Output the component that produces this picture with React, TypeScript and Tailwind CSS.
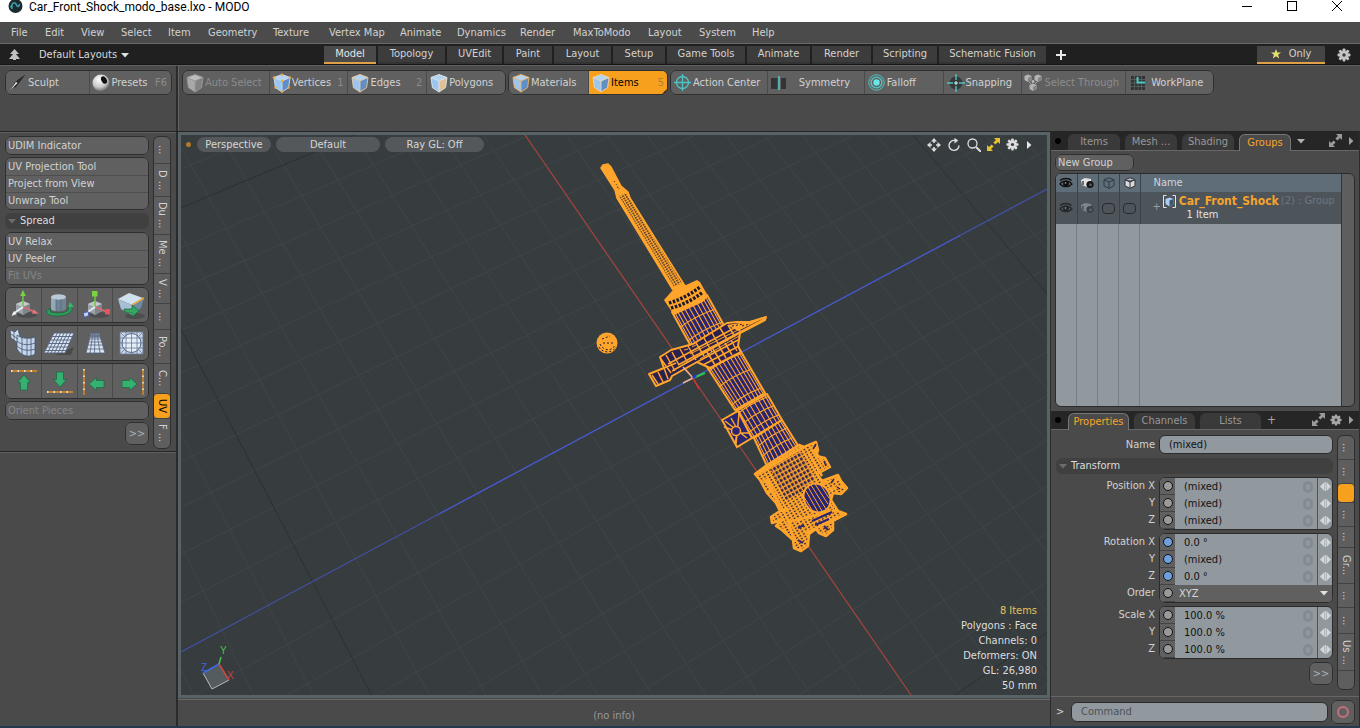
import React from "react";

type P = [number, number];

/* ---------- small icons ---------- */

function Cube({ edge = "#cfe0f2", dim = false, face = false, dots = false, size = 20 }: { edge?: string; dim?: boolean; face?: boolean; dots?: boolean; size?: number }) {
  const l = dim ? "#a9a9a9" : "#9cc6f0";
  const r = dim ? "#838383" : face ? "#e3bf92" : "#5f8fc4";
  const t = dim ? "#bdbdbd" : "#b4d4f2";
  return (
    <svg width={size} height={size} viewBox="0 0 20 20" className="shrink-0">
      <path d="M2 4.5 10 8v11L3.4 14.6Z" fill={l} />
      <path d="M18 4.5 10 8v11l6.6-4.4Z" fill={r} />
      <path d="M2 4.5 10 1.5l8 3L10 8Z" fill={t} />
      <path d="M2 4.5 10 1.5l8 3-1.4 10.1L10 19l-6.6-4.4ZM2 4.5 10 8l8-3.5M10 8v11" fill="none" stroke={edge} strokeWidth=".9" strokeLinejoin="round" />
      {dots && [[2, 4.5], [10, 1.8], [18, 4.5], [10, 8], [10, 18.6], [3.4, 14.6], [16.6, 14.6]].map(([x, y]) => (
        <circle key={`${x}-${y}`} cx={x} cy={y} r="1.2" fill="#f2a83c" />
      ))}
    </svg>
  );
}

const Gear = ({ color = "#c4c4c4", size = 14 }: { color?: string; size?: number }) => (
  <svg width={size} height={size} viewBox="0 0 14 14" className="shrink-0">
    {[0, 45, 90, 135].map((a) => (
      <rect key={a} x="5.6" y="0.5" width="2.8" height="13" rx="0.8" fill={color} transform={`rotate(${a} 7 7)`} />
    ))}
    <circle cx="7" cy="7" r="4.6" fill={color} />
    <circle cx="7" cy="7" r="1.7" fill="#3c3c3c" />
  </svg>
);

const Expand = ({ color = "#b4b4b4" }: { color?: string }) => (
  <svg width="13" height="13" viewBox="0 0 13 13" className="shrink-0" fill={color}>
    <path d="M7 0h6v6l-2-2-2.6 2.6-2-2L9 2ZM6 13H0V7l2 2 2.6-2.6 2 2L4 11Z" />
  </svg>
);

const Tri = ({ dir = "down", color = "#c0c0c0" }: { dir?: "down" | "right"; color?: string }) => (
  <svg width="8" height="8" viewBox="0 0 8 8" className="shrink-0" fill={color}>
    {dir === "down" ? <path d="M0 2h8L4 6.4Z" /> : <path d="M2 0v8l4.4-4Z" />}
  </svg>
);

const BrushIcon = () => (
  <svg width="20" height="18" viewBox="0 0 20 18" className="shrink-0">
    <path d="M18 0C12 3 8 8 6 13l1.6 1C11 9 15 5 18 0Z" fill="#2a2a2a" stroke="#777" strokeWidth=".4" />
    <path d="M15 3C9 5 6 9 5 12L1 17l5-3.6C9 11 12 8 15 3Z" fill="#2c2c2c" />
    <path d="M1 17C4 14 6 11 8 8L9.500 9C6 12 4 15 1 17Z" fill="#f2f2f2" />
  </svg>
);

const BallIcon = () => (
  <svg width="18" height="18" viewBox="0 0 18 18" className="shrink-0">
    <defs>
      <radialGradient id="ball" cx=".4" cy=".3" r=".75">
        <stop offset="0" stopColor="#fff" />
        <stop offset=".6" stopColor="#c8c8c8" />
        <stop offset="1" stopColor="#555" />
      </radialGradient>
    </defs>
    <circle cx="9" cy="9" r="8.500" fill="url(#ball)" />
    <ellipse cx="12" cy="6" rx="2.600" ry="4" fill="#111" transform="rotate(-28 12 6)" />
  </svg>
);

const CenterIcon = () => (
  <svg width="17" height="17" viewBox="0 0 17 17" className="shrink-0" fill="none" stroke="#4fc4c4" strokeWidth="1.3">
    <circle cx="8.500" cy="8.500" r="6" />
    <path d="M8.500 0v17M0 8.500h17" />
  </svg>
);

const SymmetryIcon = () => (
  <svg width="16" height="16" viewBox="0 0 16 16" className="shrink-0">
    <path d="M0 3h6.500v11H0ZM10 3h5v11h-5Z" fill="#343434" />
    <path d="M8 1v14" stroke="#4fc4c4" strokeWidth="1.600" />
  </svg>
);

const FalloffIcon = () => (
  <svg width="17" height="17" viewBox="0 0 17 17" className="shrink-0" fill="none" stroke="#4fc4c4">
    <circle cx="8.500" cy="8.500" r="7.700" />
    <circle cx="8.500" cy="8.500" r="5.400" strokeWidth="1.400" />
    <circle cx="8.500" cy="8.500" r="3.200" fill="#6be4e4" stroke="none" />
  </svg>
);

const SnapIcon = () => (
  <svg width="18" height="18" viewBox="0 0 18 18" className="shrink-0">
    <circle cx="9" cy="9" r="6.500" fill="#343838" />
    <path d="M9 0v6M9 12v6M0 9h6M12 9h6" stroke="#4fc4c4" strokeWidth="1.400" />
    <path d="M9 7v4M7 9h4" stroke="#c8ffff" />
  </svg>
);

const ThroughIcon = () => (
  <svg width="18" height="18" viewBox="0 0 18 18" className="shrink-0">
    {[[4, 4], [14, 4], [9, 13]].map(([x, y]) => (
      <g key={`${x}${y}`}>
        <path d={`M${x - 3.5} ${y - 2} ${x} ${y - 3.5} ${x + 3.5} ${y - 2}V${y + 2}L${x} ${y + 4} ${x - 3.5} ${y + 2}Z`} fill="#b4b4b4" />
        <path d={`M${x} ${y}v4l3.500-2v-4Z`} fill="#858585" />
      </g>
    ))}
    <path d="M5 8l3 3M13 8l-3 3" stroke="#a8a8a8" />
    <circle cx="9" cy="7.500" r="1.500" fill="#b8b8b8" />
  </svg>
);

const PlaneIcon = () => (
  <svg width="14" height="15" viewBox="0 0 14 15" className="shrink-0">
    <rect y="1" width="14" height="14" fill="#303434" />
    <path d="M0 4.500h14M0 8h14M0 11.500h14M3.500 1v14M7 1v14M10.500 1v14" stroke="#555b5b" />
    <path d="M6.500 2v5.500H14" fill="none" stroke="#4fc4c4" strokeWidth="2" />
  </svg>
);

const Eye = ({ color }: { color: string }) => (
  <svg width="14" height="12" viewBox="0 0 14 12" className="block" fill="none" stroke={color}>
    <path d="M1 7C3 3.500 10 3 13 7 10 10.500 4 10.500 1 7Z" strokeWidth="1.200" />
    <circle cx="7" cy="6.500" r="2.500" fill={color} />
    <path d="M1 3.500C4 .8 10 .8 12.500 3.500" strokeWidth="1.300" />
    <circle cx="6.500" cy="6" r=".8" fill="#aaa" stroke="none" />
  </svg>
);

const Camera = ({ dim = false }: { dim?: boolean }) => (
  <svg width="13" height="12" viewBox="0 0 13 12" className="block">
    <path d="M0 3 4 1l6 1v6L6 10 1 8Z" fill={dim ? "#7f868b" : "#e2e2e2"} />
    <circle cx="9" cy="7.500" r="3.600" fill={dim ? "#3b4146" : "#141414"} />
    <circle cx="9.500" cy="7.800" r="1.500" fill={dim ? "#59626a" : "#555"} />
    <path d="M2 4v4" stroke={dim ? "#4e555a" : "#444"} strokeWidth="1.500" />
  </svg>
);

const HexCube = ({ color, fill }: { color: string; fill: string }) => (
  <svg width="12" height="12" viewBox="0 0 12 12" className="block" fill={fill} stroke={color} strokeLinejoin="round">
    <path d="M6 .8 11 2.800v6L6 11.400 1 8.800v-6ZM1 2.800 6 5l5-2.200M6 5v6.400" />
  </svg>
);

/* ---------- UV tool icons ---------- */

const svgTool = "h-8 w-8 shrink-0";

function AxisTool({ blocks = false }: { blocks?: boolean }) {
  return (
    <svg viewBox="0 0 32 32" className={svgTool}>
      <ellipse cx="20" cy="26" rx="10" ry="3" fill="#3a3a3a" opacity=".5" />
      <path d="M9 15 16 12l7 3v7l-7 4-7-4Z" fill="#9aa3a8" />
      <path d="M9 15 16 18l7-3-7-3Z" fill="#c3c9cc" />
      <path d="M16 18v8l7-4v-7Z" fill="#7d868b" />
      <path d="M16 18V6" stroke="#6cc83c" strokeWidth="1.500" />
      <path d="M16 18 28 23" stroke="#d96a70" strokeWidth="1.800" />
      <path d="M16 18 6 25" stroke="#e6ecf5" strokeWidth="2" />
      {blocks ? (
        <>
          <rect x="13" y="2" width="5.500" height="5.500" fill="#77d33f" />
          <rect x="26" y="20" width="5" height="5.500" fill="#e2555c" />
          <path d="M4 24l5-1.500 1 4-4.500 2Z" fill="#c2d0f5" stroke="#4257a0" />
        </>
      ) : (
        <>
          <path d="M16 1l2.800 6h-5.600Z" fill="#77d33f" />
          <path d="M31.500 24.500 25 24.800l1.800-4.200Z" fill="#e8747a" />
          <path d="M4.500 27 7 22l2.500 3Z" fill="#eef3fb" />
        </>
      )}
    </svg>
  );
}

const CylTool = () => (
  <svg viewBox="0 0 32 32" className={svgTool}>
    <path d="M9 19c-9 2-7 8 5 8 11 0 18-5 14-10l-3 1c3 4-4 6-11 6-8 0-9-3-5-5Z" fill="#2f9e5c" stroke="#17613a" strokeWidth=".7" />
    <path d="M8 8v12c2 3 13 3 15 0V8Z" fill="#6f8596" />
    <path d="M8 8v12c1 1 3 2 5 2V9Z" fill="#93a9b8" />
    <ellipse cx="15.500" cy="8" rx="7.500" ry="2.800" fill="#b9cad6" />
    <path d="M13 10v12M18 10v12" stroke="#52687a" strokeWidth=".7" />
    <path d="m27 13 4 5h-6Z" fill="#3db46d" />
  </svg>
);

const WrapTool = () => (
  <svg viewBox="0 0 32 32" className={svgTool}>
    <ellipse cx="20" cy="27" rx="10" ry="3" fill="#3a3a3a" opacity=".5" />
    <path d="M3 10 14 4l14 5-11 7Z" fill="#cfe0ee" />
    <path d="M3 10 17 16v10L6 20Z" fill="#a5bfd4" />
    <path d="M17 16 29 9l-3 10-9 7Z" fill="#6c8aa3" />
    <path d="M17 16 29 9" stroke="#e9a93e" strokeWidth="1.600" />
    <path d="M9 20h8v-4l7 6-7 6v-4H11Z" fill="#34a862" stroke="#17613a" strokeWidth=".7" />
  </svg>
);

const SkirtTool = () => (
  <svg viewBox="0 0 32 32" className={svgTool} stroke="#44546e" strokeWidth=".8">
    <path d="M3 3l5 2 3-3 2 8-2 6-7-5Z" fill="#cfdcec" />
    <path d="M10 8c5 4 13 4 18 2v17c-6 4-14 2-18-5Z" fill="#c3d5ea" />
    <path d="M15 10v17M20 11.500V29M24 11v18M10 14c5 5 13 4 18 2M10 19c5 5 13 5 18 3M4 7l7 5M7 5v8" fill="none" />
  </svg>
);

const GridTool = () => (
  <svg viewBox="0 0 32 32" className={svgTool}>
    <path d="M12 28h16l3-8Z" fill="#333" opacity=".5" />
    <path d="M11 6h20L22 26H1Z" fill="#d9e4f2" />
    <path d="M9.300 9.500h20.100M7.600 13h20.100M6 16.500h20M4.300 20h20.300M2.600 23.500H23M14.300 6 4.500 26M17.600 6 8 26M21 6l-9.500 20M24.300 6 15 26M27.600 6 18.500 26M11 6 1 26h21l9-20Z" fill="none" stroke="#53627e" strokeWidth=".9" />
  </svg>
);

const TrapTool = () => (
  <svg viewBox="0 0 32 32" className={svgTool}>
    <path d="M12 6h8l6 20H7Z" fill="#d9e4f2" />
    <path d="M12 6h8l1.200 5H10.800Z" fill="#8793a8" />
    <path d="M11 9h10M10.200 12h11.600M9.500 15h13.100M8.900 18h14.500M8 22h17M7 26h19L20 6h-8ZM14 6l-3 20M16 6l-.5 20M18 6l3 20" fill="none" stroke="#53627e" strokeWidth=".8" />
  </svg>
);

const SphereTool = () => (
  <svg viewBox="0 0 32 32" className={svgTool}>
    <rect x="5" y="5" width="23" height="22" fill="#c6d5e8" />
    <circle cx="16.500" cy="16" r="9.500" fill="#e4eef9" stroke="#53627e" />
    <path d="M5 5h23v22H5ZM5 11h23M5 21h23M5 16h23M11 5v22M22 5v22M16.500 5v22M5 5l5 5M28 5l-5 5M5 27l5-5M28 27l-5-5" fill="none" stroke="#6b7a94" strokeWidth=".8" />
  </svg>
);

function ArrowTool({ dir }: { dir: "up" | "down" | "left" | "right" }) {
  const shape = { up: "rotate(0 17 18)", right: "rotate(90 15 17)", down: "translate(0 -2) rotate(180 17 17)", left: "rotate(270 18 18)" }[dir];
  const lines = { up: "M4 6h26", down: "M4 27h26", left: "M5 4v26", right: "M28 4v26" }[dir];
  return (
    <svg viewBox="0 0 32 32" className={svgTool}>
      <path d={lines} stroke="#e58f1c" strokeWidth="1.300" />
      <path d={lines} stroke="#fff" strokeWidth="1.300" strokeDasharray="1.500 5" />
      <path d="M17 10l6.500 7.500h-3V25h-7v-7.500h-3Z" fill="#36b070" stroke="#1c6b42" strokeWidth=".8" transform={shape} />
    </svg>
  );
}

/* ---------- 3D view ---------- */

const ORANGE = "#ffa52b";
const NAVY = "#2a2570";

const lerp = (a: P, b: P, t: number): P => [a[0] + (b[0] - a[0]) * t, a[1] + (b[1] - a[1]) * t];
const pts = (list: P[]) => list.map((p) => p.join(",")).join(" ");

/* Meshed quad: corners run left-top, right-top, right-bottom, left-bottom. */
function Mesh({ q, cols, rows, bow = 0, fill = NAVY }: { q: [P, P, P, P]; cols: number; rows: number[]; bow?: number; fill?: string }) {
  const [a, b, c, d] = q;
  const len = Math.hypot(d[0] - a[0], d[1] - a[1]) || 1;
  const ux = ((d[0] - a[0]) / len) * bow;
  const uy = ((d[1] - a[1]) / len) * bow;
  const ring = (t: number) => {
    const p = lerp(a, d, t);
    const r = lerp(b, c, t);
    const m = lerp(p, r, 0.5);
    return `M${p.join(" ")}Q${m[0] + ux} ${m[1] + uy} ${r.join(" ")}`;
  };
  let path = "";
  for (let i = 1; i < cols; i++) {
    const t = 0.5 - Math.cos((Math.PI * i) / cols) * 0.5;
    const s = t * 0.5 + (i / cols) * 0.5;
    path += `M${lerp(a, b, s).join(" ")}L${lerp(d, c, s).join(" ")}`;
  }
  rows.forEach((t) => (path += ring(t)));
  return (
    <g stroke={ORANGE}>
      <polygon points={pts(q)} fill={fill} strokeWidth="2" strokeLinejoin="round" />
      <path d={path} fill="none" strokeWidth="1.100" />
    </g>
  );
}

function gridLines() {
  const light: string[] = [];
  const dark: string[] = [];
  for (let k = -16; k <= 16; k++) {
    if (k === 0) continue;
    const t = k / 10;
    const x = 525 + (414.5 * t) / (1 + 0.0685 * t);
    const sx = (x + 1260) / (135 + 2440);
    (k % 10 ? light : dark).push(`M${x} 135L${x + sx * 600} 735`);
    const y = 652 + (500 * t) / (1 - 0.126 * t);
    const sy = (-1413 - y) / (4040 - 181);
    (k % 10 ? light : dark).push(`M181 ${y}L1081 ${y + sy * 900}`);
  }
  return [light.join(""), dark.join("")];
}

function Scene() {
  const [light, dark] = gridLines();
  return (
    <svg viewBox="181 135 866 560" preserveAspectRatio="xMidYMid slice" className="absolute inset-0 h-full w-full">
      <defs>
        <pattern id="dense" width="4" height="3" patternUnits="userSpaceOnUse" patternTransform="rotate(-31)">
          <rect width="4" height="3" fill={ORANGE} />
          <rect x="1" y="1" width="2" height="1.200" fill="#29203c" />
        </pattern>
        <pattern id="loose" width="4" height="4.500" patternUnits="userSpaceOnUse" patternTransform="rotate(-29)">
          <rect width="4" height="4.500" fill={ORANGE} />
          <rect x="1" y="1" width="2.600" height="3" fill="#2b2150" />
        </pattern>
        <pattern id="rod" width="3" height="2.500" patternUnits="userSpaceOnUse" patternTransform="rotate(-31)">
          <rect width="3" height="2.500" fill={ORANGE} />
          <rect x="0" y="1" width="1.800" height="1.200" fill="#20192c" />
        </pattern>
      </defs>
      <path d={light} stroke="#3f4548" fill="none" />
      <path d={dark} stroke="#2c3134" fill="none" />
      <path d="M525 135 911 695" stroke="#a8453f" strokeWidth="1.200" />
      <path d="M181 652 693 378 1047 189" stroke="#4450a4" strokeWidth="1.200" fill="none" />
      <path d="M440 513.500 693 378 960 235.500" stroke="#4659c6" strokeWidth="1.200" fill="none" />

      {/* ball */}
      <circle cx="607" cy="343" r="10.500" fill={ORANGE} />
      <path d="M599 347c3 6 13 7 17 0M600 344c3 7 12 8 15 1M602 339l8-3M603 343h10" stroke="#241c30" strokeDasharray="2 2" fill="none" />

      {/* rod */}
      <polygon points="601,168 603,165 608,164 611,167 621,186 628,192 630,198 685,286 673,290 617,198 615,190" fill={ORANGE} stroke={ORANGE} strokeWidth="1.500" strokeLinejoin="round" />
      <polygon points="619,196 626,193 682,283 674,287" fill="url(#rod)" />
      <path d="M614 181l6 9M617 187l3 1" stroke="#20192c" strokeDasharray="1 3" />

      {/* upper cylinder */}
      <Mesh q={[[672, 312], [707, 295], [726, 329], [692, 348]]} cols={11} rows={[0.42, 0.8]} bow={-3} />
      <polygon points="664,300 672,291 686,285 697,280 700,282 708,296 703,302 674,315" fill={ORANGE} />
      <path d="M669 303C680 300 691 294 700 287M671 308C683 305 694 299 703 292" stroke="#1c1726" strokeWidth="3.500" strokeDasharray="2.500 1.500" fill="none" />

      {/* lower cylinder */}
      <Mesh q={[[707, 367], [740, 350], [765, 393], [735, 410]]} cols={11} rows={[0.08, 0.45, 0.88]} bow={-3} />

      {/* flange */}
      <polygon points="649,374 664,368 660,357 671,350 693,344 727,323 737,322 750,322 766,317 765,320 740,333 738,346 741,352 710,368 697,362 672,376 670,380 656,386" fill="#2b2150" stroke={ORANGE} strokeWidth="2" strokeLinejoin="round" />
      <path d="M661 359 671 373M666 355l9 16M672 352l7 13M664 368l12-5M652 375l6 9M658 372l5 10M664 368l4 11M678 365 766 318M672 371 745 330M668 364 740 325M680 349l8 14M688 346l8 14M696 343l8 13M704 338l8 14M712 333l8 14M720 328l8 13M728 325l7 12M736 324l4 7M697 362 738 340M703 365 739 346M707 352l8 13M713 349l8 13M719 346l7 12M725 343l7 12M731 340l6 11" stroke={ORANGE} strokeWidth="1.500" fill="none" />
      <path d="M684 350l4-1M692 347l4-2M690 354 760 319M700 359 739 336" stroke={ORANGE} fill="none" />
      <path d="M727 325l13-2 24-5-26 13Z" fill={ORANGE} />
      <path d="M732 326l12-2M742 326l8-2" stroke="#29203c" strokeDasharray="2 2" />

      {/* clamp and side plate */}
      <Mesh q={[[736, 411], [767, 394], [782, 420], [752, 438]]} cols={9} rows={[0.1, 0.45, 0.8]} bow={-3} />
      <Mesh q={[[754, 438], [782, 420], [799, 447], [767, 466]]} cols={10} rows={[0.3, 0.65]} bow={-3} />
      <polygon points="722,420 738,411 752,438 737,447" fill={NAVY} stroke={ORANGE} strokeWidth="2" />
      <path d="M725 421 747 438M739 414 736 444M724 427l9 3M738 433l11 0M731 418l5 9M737 434l-2 10" stroke={ORANGE} strokeWidth="1.500" />
      <circle cx="736" cy="431" r="4.500" fill={NAVY} stroke={ORANGE} strokeWidth="1.500" />

      {/* reservoir housing */}
      <polygon points="755,474 767,465 799,445 804,447 816,442 818,450 816,456 825,458 830,467 817,474 822,481 838,475 841,481 847,488 841,494 833,493 831,500 838,511 846,514 833,521 833,530 826,536 819,533 816,529 809,534 808,546 801,551 794,548 793,540 782,530 776,526 782,520 772,523 771,517 780,511 776,503 767,493 760,480" fill="url(#dense)" stroke={ORANGE} strokeWidth="2.500" strokeLinejoin="round" />
      <polygon points="770,468 800,450 815,480 802,492 786,500" fill="url(#loose)" />
      <path d="M757 474 804 447M762 483l5-3 20 38 8 24M767 493l6-3M780 511l9-2M788 522l50-12M795 540l-6-14M806 533l40-19M808 452l14 24M812 447l14 20M822 484l16-5M826 490l18-4" stroke={ORANGE} strokeWidth="2.500" fill="none" />
      <path d="M812 521l20-9M798 528l6-3M815 525l14-6M824 526l4 4M798 540l5 3" stroke={NAVY} strokeWidth="2" />
      <path d="M816 444l-3 5M824 461l2 5M834 479l-3 4M840 489l-3-2" stroke="#2b2150" strokeWidth="1.500" />
      <ellipse cx="817" cy="498" rx="13" ry="15" fill={NAVY} stroke={ORANGE} strokeWidth="2" transform="rotate(-30 817 498)" />
      <path d="M806 491l12 21M808 487l14 24M811 485l15 24M815 484l13 20M820 484l9 14M804 497l8 13" stroke={ORANGE} />

      {/* origin handle */}
      <path d="M693 378 683 367M693 378l-10 5" stroke="#e8b48c" strokeWidth="1.500" />
      <path d="M693 378l12-5" stroke="#2fc54a" strokeWidth="2" />
      <path d="M693 378l3-3" stroke="#2233dd" strokeWidth="2.500" />
      <path d="M693 378l6 11" stroke="#e0312c" strokeWidth="1.500" />

      {/* orientation gizmo */}
      <polygon points="203,673 219,664 229,680 212,689" fill="#555c5f" stroke="#b5babd" />
      <path d="M203 673 219 664" stroke="#3c66e0" strokeWidth="1.500" />
      <path d="M219 664 229 680" stroke="#c9423c" strokeWidth="1.500" />
      <path d="M219 664l2-7" stroke="#4bc24b" strokeWidth="1.500" />
      <g fontFamily="Liberation Sans, sans-serif" fontSize="10">
        <text x="220" y="654" fill="#4bc24b">Y</text>
        <text x="201" y="671" fill="#3c66e0">Z</text>
        <text x="227" y="679" fill="#c9423c">X</text>
      </g>
    </svg>
  );
}

/* ---------- shared classes ---------- */

const group = "flex overflow-hidden rounded-md border border-[#2e2e2e] bg-[#606060] shadow-[0_0_1px_#6a6a6a]";
const toolBtn = "flex min-w-0 items-center border-l border-[#4a4a4a] first:border-l-0 whitespace-nowrap";
const field = "h-full w-full min-w-0 bg-[#91999f] text-[#111] outline-none";

/* ---------- sections ---------- */

const MENUS = ["File", "Edit", "View", "Select", "Item", "Geometry", "Texture", "Vertex Map", "Animate", "Dynamics", "Render", "MaxToModo", "Layout", "System", "Help"];
const LAYOUTS = ["Model", "Topology", "UVEdit", "Paint", "Layout", "Setup", "Game Tools", "Animate", "Render", "Scripting", "Schematic Fusion"];

function TitleBar() {
  return (
    <header className="flex h-[22px] shrink-0 items-start justify-between bg-white text-black">
      <div className="flex items-start gap-[6px] pl-2">
        <svg width="15" height="15" viewBox="0 0 15 15">
          <circle cx="7.500" cy="6" r="7" fill="#1c2a30" />
          <path d="M4 9V5c0-2 3-3 4-1l1 2c1 1 3 0 2-2M4 5C3 6 3 7 2 7" fill="none" stroke="#3f9aa3" strokeWidth="1.600" />
        </svg>
        <h1 className="font-['Roboto',sans-serif] text-[12px] leading-[15px]">Car_Front_Shock_modo_base.lxo - MODO</h1>
      </div>
      <div className="flex gap-[35px] pr-[18px]">
        <button aria-label="Minimize" className="h-3 w-[10px]"><svg width="10" height="12"><path d="M0 6.500h10" stroke="#000" /></svg></button>
        <button aria-label="Maximize" className="h-3 w-[10px]"><svg width="10" height="12"><rect x=".5" y="1.500" width="9" height="9" fill="none" stroke="#000" /></svg></button>
        <button aria-label="Close" className="h-3 w-[10px]"><svg width="10" height="12"><path d="M0 1l10 10M10 1 0 11" stroke="#000" /></svg></button>
      </div>
    </header>
  );
}

function MenuBar() {
  return (
    <nav className="grid h-[22px] shrink-0 grid-cols-[34px_36px_40px_47px_40px_65px_56px_71px_57px_63px_53px_75px_51px_53px_40px] items-center border-b border-[#6a6a6a] bg-[#4b4b4b] pl-[11px] pt-px">
      {MENUS.map((m) => <button key={m} className="text-left whitespace-nowrap">{m}</button>)}
    </nav>
  );
}

function LayoutBar() {
  return (
    <div className="flex h-[21px] shrink-0 items-center border-b border-[#161616] bg-[#202020] pt-px">
      <div className="flex w-[324px] items-center gap-[19px] pl-[9px]">
        <svg width="11" height="11" viewBox="0 0 11 11" fill="#c0c0c0"><path d="M5.500 0 10 5H7l4 5H7v1H4v-1H0l4-5H1Z" /></svg>
        <button className="flex items-center gap-1 text-[#d8d8d8]">Default Layouts <Tri color="#e0e0e0" /></button>
      </div>
      <div className="grid h-[18px] grid-cols-[52px_67px_55px_48px_57px_52px_78px_63px_59px_64px_107px] gap-[2px]">
        {LAYOUTS.map((l, i) => (
          <button key={l} className={`whitespace-nowrap border-b-2 pt-px ${i === 0 ? "border-[#e0a048] bg-[#4a4a4a] text-[#e4e4e4]" : "border-[#333] bg-[#3c3c3c]"}`}>{l}</button>
        ))}
      </div>
      <button aria-label="Add layout" className="ml-[10px]">
        <svg width="10" height="10"><path d="M5 0v10M0 5h10" stroke="#e8e8e8" strokeWidth="2" /></svg>
      </button>
      <div className="ml-auto flex h-[18px] items-center gap-3 pr-[9px]">
        <button className="flex h-full w-[68px] items-center justify-center gap-2 border-b-2 border-[#e0a048] bg-[#454545]">
          <svg width="10" height="10" viewBox="0 0 10 10"><path d="M5 0l1.300 3.500H10L7.100 5.700 8.200 9.500 5 7.300 1.800 9.500 2.900 5.700 0 3.500h3.700Z" fill="#e6e070" /></svg>
          Only
        </button>
        <Gear />
      </div>
    </div>
  );
}

function ToolBar() {
  return (
    <div className="flex h-[67px] shrink-0 border-b border-[#242424] border-t border-t-[#606060] bg-[#4a4a4a]">
      <div className="w-[178px] shrink-0 border-r-2 border-[#2b2b2b] px-[5px] pt-1">
        <div className={`${group} h-[25px] w-[167px]`}>
          <button className={`${toolBtn} w-1/2 pl-[2px]`}><BrushIcon />Sculpt</button>
          <button className={`${toolBtn} w-1/2 gap-[2px] pl-[2px]`}><BallIcon />Presets<span className="ml-auto pr-1 text-[#8c8c8c]">F6</span></button>
        </div>
      </div>
      <div className="flex min-w-0 flex-1 gap-[2px] border-l border-[#646464] pl-[3px] pt-1">
        <div className={`${group} h-[25px] w-[324px]`}>
          <button className={`${toolBtn} w-[86px] pl-[2px] text-[#8c8c8c]`}><Cube dim edge="#999" />Auto Select</button>
          <button className={`${toolBtn} w-[79px] pl-[2px]`}><Cube dots />Vertices<span className="ml-auto pr-1 text-[#8c8c8c]">1</span></button>
          <button className={`${toolBtn} w-[79px] pl-[2px]`}><Cube edge="#e6cba4" />Edges<span className="ml-auto pr-1 text-[#8c8c8c]">2</span></button>
          <button className={`${toolBtn} w-[79px] pl-[2px]`}><Cube face edge="#dfe6ea" />Polygons</button>
        </div>
        <div className={`${group} h-[25px] w-[160px]`}>
          <button className={`${toolBtn} w-1/2 pl-[2px]`}><Cube edge="#f0b766" />Materials</button>
          <button className={`${toolBtn} relative w-1/2 bg-[#f7a01d] pl-[2px] text-black`}>
            <Cube edge="#e8d8bc" />Items<span className="ml-auto pr-[3px] text-[#a9803c]">5</span>
            <span className="absolute bottom-0 right-0 border-b-[5px] border-l-[5px] border-b-[#222] border-l-transparent" />
          </button>
        </div>
        <div className={`${group} h-[25px] w-[544px]`}>
          <button className={`${toolBtn} w-[96px] gap-[2px] pl-[3px]`}><CenterIcon />Action Center</button>
          <button className={`${toolBtn} w-[97px] gap-3 pl-[3px]`}><SymmetryIcon />Symmetry</button>
          <button className={`${toolBtn} w-[79px] gap-[2px] pl-[3px]`}><FalloffIcon />Falloff</button>
          <button className={`${toolBtn} w-[79px] gap-[1px] pl-[3px]`}><SnapIcon />Snapping</button>
          <button className={`${toolBtn} w-[104px] gap-[2px] pl-[2px] text-[#8c8c8c]`}><ThroughIcon />Select Through</button>
          <button className={`${toolBtn} w-[88px] gap-[6px] pl-[5px]`}><PlaneIcon />WorkPlane</button>
        </div>
      </div>
    </div>
  );
}

function StackGroup({ items }: { items: string[] }) {
  return (
    <div className={`${group} flex-col`}>
      {items.map((t) => (
        <button key={t} className={`h-[17px] border-t border-[#4e4e4e] pl-[2px] text-left leading-[16px] first:border-t-0 ${t === "Fit UVs" ? "text-[#858585]" : ""}`}>{t}</button>
      ))}
    </div>
  );
}

function IconRow({ children }: { children: React.ReactNode }) {
  return (
    <div className={`${group} h-9`}>
      {React.Children.map(children, (c) => (
        <button aria-label="UV tool" className="flex flex-1 items-center justify-center border-l border-[#4a4a4a] first:border-l-0">{c}</button>
      ))}
    </div>
  );
}

function VTabs({ tabs }: { tabs: { t: string; h: string; on?: boolean }[] }) {
  return (
    <div className="flex w-[18px] shrink-0 flex-col self-start overflow-hidden rounded-md border border-[#2e2e2e] bg-[#5e5e5e]">
      {tabs.map((x, i) => (
        <button key={i} aria-label={`Tab ${i + 1}`} className={`flex items-center justify-center border-t border-[#424242] leading-[16px] whitespace-nowrap [writing-mode:vertical-rl] first:border-t-0 ${x.h} ${x.on ? "rounded-sm bg-[#f7a01d] text-black" : ""}`}>
          {x.t}
        </button>
      ))}
    </div>
  );
}

function Section({ title }: { title: string }) {
  return (
    <div className="flex h-[16px] shrink-0 items-center gap-1 rounded-md bg-[#404040] pl-[3px] text-[#dcdcdc]">
      <Tri color="#6c6c6c" />{title}
    </div>
  );
}

function LeftPanel() {
  return (
    <aside className="flex w-[178px] shrink-0 flex-col border-r-2 border-[#2b2b2b]">
      <div className="flex gap-1 border-b border-[#262626] border-t border-t-[#606060] px-[5px] pb-[2px] pt-[3px]">
        <div className="flex min-w-0 flex-1 flex-col gap-[2px]">
          <StackGroup items={["UDIM Indicator"]} />
          <StackGroup items={["UV Projection Tool", "Project from View", "Unwrap Tool"]} />
          <div className="py-px"><Section title="Spread" /></div>
          <StackGroup items={["UV Relax", "UV Peeler", "Fit UVs"]} />
          <IconRow><AxisTool /><CylTool /><AxisTool blocks /><WrapTool /></IconRow>
          <IconRow><SkirtTool /><GridTool /><TrapTool /><SphereTool /></IconRow>
          <IconRow><ArrowTool dir="up" /><ArrowTool dir="down" /><ArrowTool dir="left" /><ArrowTool dir="right" /></IconRow>
          <button className={`${group} h-[19px] items-center pl-[2px] text-[#858585]`}>Orient Pieces</button>
          <button className={`${group} h-[23px] w-6 items-center justify-center self-end text-[#a6b2ba]`}>&gt;&gt;</button>
        </div>
        <VTabs tabs={[
          { t: "...", h: "h-[26px]" }, { t: "D ...", h: "h-[33px]" }, { t: "Du ...", h: "h-[38px]" }, { t: "Me ...", h: "h-[39px]" },
          { t: "V ...", h: "h-[30px]" }, { t: "...", h: "h-[26px]" }, { t: "Po...", h: "h-[34px]" }, { t: "C...", h: "h-[30px]" },
          { t: "UV", h: "h-[25px]", on: true }, { t: "F ...", h: "h-[30px]" },
        ]} />
      </div>
      <div className="flex-1 border-t border-[#606060]" />
    </aside>
  );
}

const pill = "h-[15px] rounded-full bg-[#54585a] leading-[15px] text-[#d6d6d6]";

function Viewport() {
  return (
    <main className="flex min-w-0 flex-1 flex-col">
      <div className="relative min-h-0 flex-1 overflow-hidden border-[3px] border-[#586368] bg-[#373c3f]">
        <Scene />
        <div className="absolute inset-x-0 top-[2px] flex items-center">
          <span className="ml-[5px] h-[5px] w-[5px] rounded-full bg-[#b07a2c]" />
          <button className={`${pill} ml-[6px] w-[74px]`}>Perspective</button>
          <button className={`${pill} ml-[5px] w-[104px]`}>Default</button>
          <button className={`${pill} ml-[5px] w-[99px]`}>Ray GL: Off</button>
          <div className="ml-auto flex items-center gap-[6px] pr-[14px]">
            <svg width="14" height="14" viewBox="0 0 14 14" fill="#dcdcdc"><path d="M7 0l3 3.500H7.800V5H6.200V3.500H4ZM7 14l3-3.500H7.800V9H6.200v1.500H4ZM0 7l3.500-3v2.200H5v1.600H3.500V10ZM14 7l-3.500-3v2.200H9v1.600h1.500V10Z" /></svg>
            <svg width="14" height="14" viewBox="0 0 14 14" fill="none" stroke="#dcdcdc" strokeWidth="1.400"><path d="M8 2.500A5 5 0 1 0 12 7.500" /><path d="M7.500 0l3.500 2.600-3.500 2.600" fill="#dcdcdc" strokeWidth=".5" /></svg>
            <svg width="14" height="14" viewBox="0 0 14 14" fill="none" stroke="#dcdcdc" strokeWidth="1.300"><circle cx="5.500" cy="5.500" r="4.500" /><path d="M9 9l5 5" strokeWidth="2" /></svg>
            <Expand color="#e6c22c" />
            <Gear color="#dcdcdc" size={13} />
            <Tri dir="right" color="#e8e8e8" />
          </div>
        </div>
        <div className="absolute bottom-[2px] right-[10px] text-right leading-[15px] text-[#dedede]">
          <p className="text-[#e8c35a]">8 Items</p>
          <p>Polygons : Face</p>
          <p>Channels: 0</p>
          <p>Deformers: ON</p>
          <p>GL: 26,980</p>
          <p>50 mm</p>
        </div>
      </div>
      <div className="mt-px flex h-[27px] shrink-0 items-center justify-center border-t border-[#6a6a6a] pt-[5px] text-[#989898]">(no info)</div>
    </main>
  );
}

function TabStrip({ tabs, active, gear = false, tail }: { tabs: string[]; active: string; gear?: boolean; tail: React.ReactNode }) {
  return (
    <div className="flex h-[19px] shrink-0 items-end border-b border-[#666] bg-[#262626] pr-1">
      <span className="mb-[6px] ml-1 mr-[7px] h-[6px] w-[6px] rounded-full bg-black" />
      <div className="flex h-[16px] gap-[5px]">
        {tabs.map((t) => (
          <button key={t} className={`rounded-t-md whitespace-nowrap ${gear ? "w-[61px]" : "w-[52px]"} ${t === active ? "-mb-px border border-b-0 border-[#777] bg-[#4a4a4a] text-[#f7a52c]" : "bg-[#3a3a3a] text-[#989898]"}`}>{t}</button>
        ))}
      </div>
      <span className="mb-[3px] ml-[6px] flex h-3 items-center text-[12px] text-[#a8a8a8]">{tail}</span>
      <span className="mb-[3px] ml-auto flex items-center gap-[5px]">
        <Expand color="#9a9a9a" />{gear && <Gear color="#a8a8a8" size={12} />}<Tri dir="right" color="#a0a0a0" />
      </span>
    </div>
  );
}

function Groups() {
  const cell = "border-r border-[#39434a]";
  const box = <span className="mx-auto block h-[11px] w-[13px] rounded border border-[#262c30]" />;
  return (
    <section className="flex h-[279px] shrink-0 flex-col">
      <TabStrip tabs={["Items", "Mesh ...", "Shading", "Groups"]} active="Groups" tail={<Tri color="#b0b0b0" />} />
      <div className="flex min-h-0 flex-1 flex-col pb-1 pl-1 pr-[4px] pt-[3px]">
        <button className={`${group} h-[17px] w-[79px] shrink-0 items-center pl-[2px]`}>New Group</button>
        <div className="mt-[2px] flex min-h-0 flex-1 overflow-hidden rounded-md border border-[#2b2b2b]">
          <div className="flex min-w-0 flex-1 flex-col bg-[#91999f]">
            <table className="w-full table-fixed border-collapse">
              <colgroup>
                <col className="w-[21px]" /><col className="w-[21px]" /><col className="w-[21px]" /><col className="w-[21px]" /><col />
              </colgroup>
              <thead>
                <tr className="h-[18px] bg-[#5f6d79]">
                  <th className={cell} aria-label="Visible"><span className="flex justify-center"><Eye color="#101010" /></span></th>
                  <th className={cell} aria-label="Render"><span className="flex justify-center"><Camera /></span></th>
                  <th className={cell} aria-label="Lock"><span className="flex justify-center"><HexCube color="#2c3a44" fill="none" /></span></th>
                  <th className={cell} aria-label="Select"><span className="flex justify-center"><HexCube color="#333" fill="#d6dade" /></span></th>
                  <th className="pl-[13px] text-left font-normal text-[#cfd4d8]">Name</th>
                </tr>
              </thead>
              <tbody>
                <tr className="h-8 bg-[#4d555b]">
                  <td className={cell}><span className="flex justify-center"><Eye color="#24292d" /></span></td>
                  <td className={cell}><span className="flex justify-center"><Camera dim /></span></td>
                  <td className={cell}>{box}</td>
                  <td className={cell}>{box}</td>
                  <td className="overflow-hidden pl-3">
                    <div className="flex h-[14px] items-center gap-[2px] whitespace-nowrap text-[#6f777c]">
                      <span className="mt-3 text-[#989ea2]">+</span>
                      <svg width="13" height="13" viewBox="0 0 13 13" className="shrink-0"><path d="M3.500.5H.5v12h3M9.500.5h3v12h-3" fill="none" stroke="#e6e6e6" /><path d="M2.500 4 6.500 2.500 10.500 4v5l-4 2.500-4-2.500Z" fill="#a9cdf0" /><path d="M6.500 5.500v6l4-2.500V4Z" fill="#3d566e" /></svg>
                      <b className="pl-px text-[12px] text-[#f5a32b]">Car_Front_Shock</b>
                      <span>(2) : Group</span>
                    </div>
                    <div className="pl-[34px] leading-[14px] text-[#e2e2e2]">1 Item</div>
                  </td>
                </tr>
              </tbody>
            </table>
            <div className="grid flex-1 grid-cols-[21px_21px_21px_21px_1fr]">
              {[0, 1, 2, 3].map((i) => <span key={i} className="border-r border-[#777f85]" />)}
            </div>
          </div>
          <div className="w-[13px] shrink-0 border-l border-[#333] bg-[#5e5e5e]" />
        </div>
      </div>
    </section>
  );
}

type Row = { label: string; value: string };

function ValueGroup({ name, rows, blue = false, order = false }: { name: string; rows: Row[]; blue?: boolean; order?: boolean }) {
  const dot = (b: boolean) => (
    <span className="flex w-[15px] shrink-0 items-center justify-center border-b border-[#444] bg-[#606060]">
      <span className={`h-[10px] w-[10px] rounded-full border border-[#111] ${b ? "bg-[#6fa0dd]" : "bg-[#9a9a9a]"}`} />
    </span>
  );
  return (
    <div className="flex gap-1">
      <div className="w-[99px] text-right">
        {rows.map((r) => <label key={r.label} htmlFor={`${name}-${r.label}`} className="block h-[17px] leading-[18px]">{r.label}</label>)}
        {order && <label htmlFor="order" className="block h-[17px] leading-[18px]">Order</label>}
      </div>
      <div className="min-w-0 flex-1 overflow-hidden rounded-md border border-[#2b2b2b] bg-[#91999f]">
        {rows.map((r) => (
          <div key={r.label} className="flex h-[17px]">
            {dot(blue)}
            <div className="flex min-w-0 flex-1 items-center">
              <input id={`${name}-${r.label}`} className={`${field} pl-[9px]`} defaultValue={r.value} />
              <span className="mr-1 h-3 w-[10px] shrink-0 rounded-full border-[3px] border-[#838b90]" />
              <button aria-label={`Adjust ${name} ${r.label}`} className="flex h-full w-[15px] shrink-0 items-center justify-center border-l border-[#4d5357]">
                <svg width="11" height="9" viewBox="0 0 11 9" className="shrink-0" fill="#d4d8da"><path d="M4.500 0v9L0 4.500ZM5.100 0h.8v9h-.8ZM6.500 0v9L11 4.500Z" /></svg>
              </button>
            </div>
          </div>
        ))}
        {order && (
          <div className="relative flex h-[17px] bg-[#606060]">
            {dot(false)}
            <select id="order" className="w-full appearance-none bg-[#606060] pl-1 text-[#d6d6d6] outline-none"><option>XYZ</option></select>
            <span className="pointer-events-none absolute right-[4px] top-1"><Tri color="#e0e0e0" /></span>
          </div>
        )}
      </div>
    </div>
  );
}

function Properties() {
  return (
    <section className="flex min-h-0 flex-1 flex-col">
      <TabStrip tabs={["Properties", "Channels", "Lists"]} active="Properties" gear tail="+" />
      <div className="flex min-h-0 flex-1 gap-1 pb-1 pl-[5px] pr-[4px] pt-[5px]">
        <div className="flex min-w-0 flex-1 flex-col gap-[3px]">
          <div className="mb-px flex h-[19px] items-center gap-1">
            <label htmlFor="name" className="w-[99px] shrink-0 text-right">Name</label>
            <input id="name" defaultValue="(mixed)" className={`${field} rounded-md border border-[#2b2b2b] pl-[9px]`} />
          </div>
          <Section title="Transform" />
          <ValueGroup name="position" rows={[{ label: "Position X", value: "(mixed)" }, { label: "Y", value: "(mixed)" }, { label: "Z", value: "(mixed)" }]} />
          <ValueGroup name="rotation" blue order rows={[{ label: "Rotation X", value: "0.0 °" }, { label: "Y", value: "(mixed)" }, { label: "Z", value: "0.0 °" }]} />
          <ValueGroup name="scale" rows={[{ label: "Scale X", value: "100.0 %" }, { label: "Y", value: "100.0 %" }, { label: "Z", value: "100.0 %" }]} />
          <button className={`${group} h-[23px] w-6 items-center justify-center self-end text-[#a6b2ba]`}>&gt;&gt;</button>
        </div>
        <VTabs tabs={[
          { t: "...", h: "h-[23px]" }, { t: "...", h: "h-[24px]" }, { t: "", h: "h-[19px]", on: true }, { t: "...", h: "h-[24px]" }, { t: "...", h: "h-[21px]" },
          { t: "Gr...", h: "h-[36px]" }, { t: "...", h: "h-[24px]" }, { t: "...", h: "h-[26px]" }, { t: "Us ...", h: "h-[37px]" }, { t: "", h: "h-[19px]" },
        ]} />
      </div>
    </section>
  );
}

export default function App() {
  return (
    <div className="flex h-screen min-h-[728px] flex-col overflow-hidden bg-[#4a4a4a] font-['DejaVu_Sans_Condensed','DejaVu_Sans',sans-serif] text-[11px] leading-[14px] text-[#d2d2d2]">
      <TitleBar />
      <MenuBar />
      <LayoutBar />
      <ToolBar />
      <div className="flex min-h-0 flex-1 border-b-2 border-[#24394c]">
        <LeftPanel />
        <Viewport />
        <aside className="flex w-[310px] shrink-0 flex-col border-l border-r border-[#2b2b2b] bg-[#4a4a4a]">
          <Groups />
          <Properties />
          <form className="flex h-[30px] shrink-0 items-center gap-[3px] border-t border-[#666] pl-[5px] pr-[4px]" onSubmit={(e) => e.preventDefault()}>
            <label htmlFor="cmd" className="w-3 shrink-0">&gt;</label>
            <input id="cmd" placeholder="Command" className="h-[20px] w-full min-w-0 rounded-md border border-[#2b2b2b] bg-[#91999f] pl-[9px] text-black outline-none placeholder:text-[#4c5256]" />
            <button aria-label="Record" className={`${group} h-6 w-6 shrink-0 items-center justify-center`}><span className="h-3 w-3 rounded-full border-2 border-[#c8707a]" /></button>
          </form>
        </aside>
      </div>
    </div>
  );
}
